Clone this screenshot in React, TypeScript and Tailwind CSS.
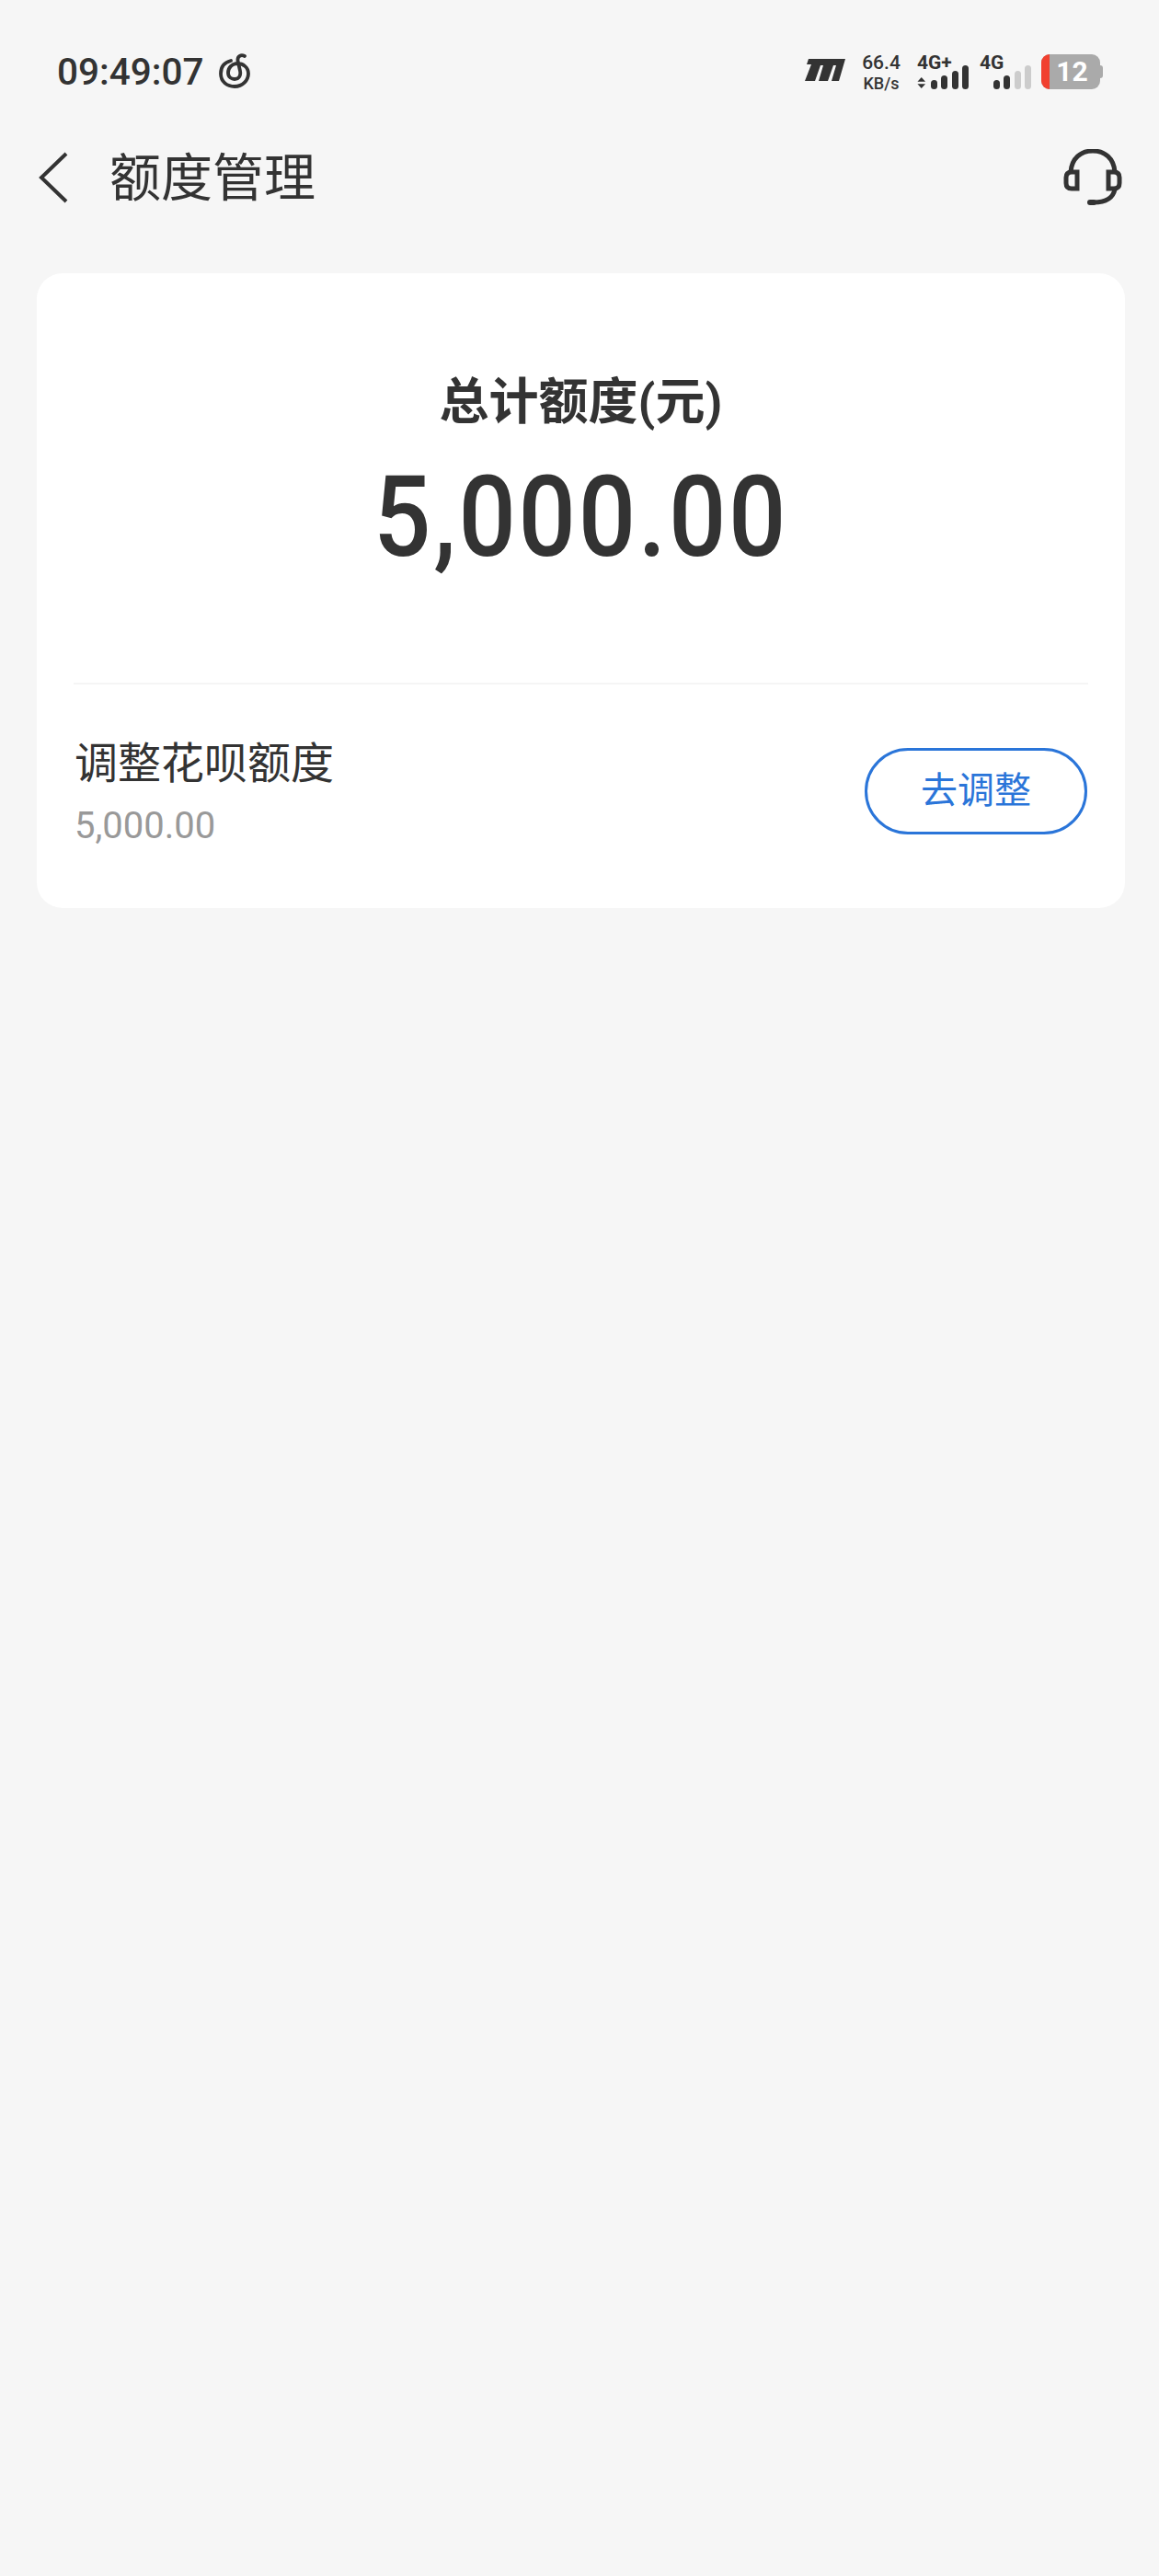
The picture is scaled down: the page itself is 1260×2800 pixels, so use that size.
import React from 'react';

const cjk = "font-['Roboto','Noto_Sans_CJK_SC',sans-serif]";

const Bars = ({ active }: { active: number }) => {
    const heights = [10, 15, 20, 26];
    return (
        <div className="flex items-end gap-[4.5px] h-[26px]">
            {heights.map((h, i) => (
                <div
                    key={i}
                    className={`w-[7px] rounded-full ${i < active ? 'bg-[#333333]' : 'bg-[#cccccc]'}`}
                    style={{ height: h }}
                />
            ))}
        </div>
    );
};

const StatusBar: React.FC = () => (
    <div className="h-[130px] pt-[56px] pl-[62px] pr-[61px] flex justify-between items-start text-[#333333]">
        <div className="flex items-center gap-[17px] h-[44px]">
            <span className="text-[40.5px] leading-[44px] font-medium">09:49:07</span>
            <svg className="-mt-[2px]" width="36" height="38" viewBox="0 0 36 38" fill="none" stroke="#333" strokeWidth="3.8" strokeLinecap="round">
                <path d="M13 8 C5 10 2 16 2 22 C2 31 9 36 17 36 C26 36 32 29 32 22 C32 15 26 11 20 11 C14 11 10 16 10 21 C10 26 14 28 17 28 C22 28 24 24 23 19 L20.5 8 C20 3 24 1 28 3" />
            </svg>
        </div>
        <div className="flex items-start h-[44px] pt-[2px]">
            <svg className="mt-[5px] mr-[18px]" width="44" height="26" viewBox="0 0 44 26" fill="#333">
                <path d="M4 1 H44 L37 25 H29 L34 8 H31 L25 25 H15 L20 8 H17 L11 25 H0 L7 7 H2 Z" />
            </svg>
            <div className="w-[42px] mr-[18px] flex flex-col items-center font-medium">
                <span className="text-[21px] leading-[20px]">66.4</span>
                <span className="text-[18px] leading-[20px] mt-[3px]">KB/s</span>
            </div>
            <div className="w-[56px] mr-[12px] flex flex-col">
                <span className="text-[21px] leading-[20px] font-bold whitespace-nowrap">4G+</span>
                <div className="flex items-end gap-[5px] -mt-[7px]">
                    <svg width="11" height="14" viewBox="0 0 11 14" fill="#333">
                        <path d="M5.5 0 L10.5 5.5 H0.5 Z M0.5 8.5 H10.5 L5.5 14 Z" />
                    </svg>
                    <Bars active={4} />
                </div>
            </div>
            <div className="w-[56px] mr-[11px] flex flex-col">
                <span className="text-[21px] leading-[20px] font-bold">4G</span>
                <div className="-mt-[7px] pl-[15px]">
                    <Bars active={2} />
                </div>
            </div>
            <div className="flex items-center mt-[1px]">
                <div className="w-[64px] h-[38px] rounded-[9px] bg-[#aaaaaa] overflow-hidden flex">
                    <div className="w-[9px] bg-[#f1402f]" />
                    <span className="flex-1 pr-[6px] text-center text-white text-[30px] leading-[38px] font-bold">12</span>
                </div>
                <div className="w-[3px] h-[14px] rounded-r-[3px] bg-[#aaaaaa]" />
            </div>
        </div>
    </div>
);

const Header: React.FC = () => (
    <div className="h-[100px] mt-[13px] pl-[41px] pr-[40px] flex items-center justify-between text-[#333333]">
        <div className="flex items-center">
            <svg width="34" height="56" viewBox="0 0 34 56" fill="none" stroke="#333" strokeWidth="4">
                <path d="M31 2 L4 28 L31 54" />
            </svg>
            <span className="ml-[44px] mt-[2px] text-[56px] leading-[70px]">额度管理</span>
        </div>
        <svg width="64" height="62" viewBox="0 0 64 62" fill="none" stroke="#333" strokeWidth="5">
            <path d="M8 25 C9 10 19 2 32 2 C45 2 55 10 56 25" />
            <path d="M15 25 H9 C5 25 3 27 3 31 V37 C3 41 5 43 9 43 H15 Z" />
            <path d="M49 25 H55 C59 25 61 27 61 31 V37 C61 41 59 43 55 43 H49 Z" />
            <path d="M56 44 C54 53 46 58 33 58" />
            <path d="M29 58 H33" strokeWidth="6" strokeLinecap="round" />
        </svg>
    </div>
);

const App: React.FC = () => {
    return (
        <div className={`w-[1260px] h-[2800px] bg-[#f6f6f6] ${cjk}`}>
            <StatusBar />
            <Header />
            <div className="mt-[54px] ml-[40px] w-[1183px] h-[690px] bg-white rounded-[28px] flex flex-col">
                <div className="h-[447px] mx-[40px] border-b-2 border-[#f5f5f5] flex flex-col items-center pt-[106px] text-[#333333]">
                    <div className="text-[54px] leading-[70px] font-bold">总计额度(元)</div>
                    <div className="mt-[20px] text-[122px] leading-[140px] font-medium tracking-[3px] scale-x-[0.9] whitespace-nowrap">5,000.00</div>
                </div>
                <div className="flex-1 mx-[40px] pb-[11px] flex items-center justify-between">
                    <div className="pl-[1px] pt-[1px]">
                        <div className="text-[47px] leading-[60px] text-[#333333]">调整花呗额度</div>
                        <div className="mt-[14px] text-[40px] leading-[48px] text-[#999999]">5,000.00</div>
                    </div>
                    <button className="w-[242px] h-[94px] mr-[1px] rounded-full border-[3px] border-[#2a75d9] text-[#2a75d9] text-[40px]">
                        去调整
                    </button>
                </div>
            </div>
        </div>
    );
};

export default App;
